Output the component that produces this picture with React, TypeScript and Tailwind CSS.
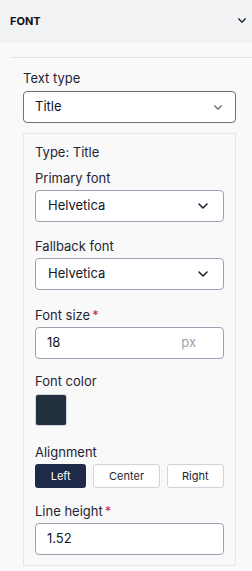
import React from "react";

const Chevron = ({ className = "" }: { className?: string }) => (
  <svg viewBox="0 0 12 8" className={className} fill="none" stroke="currentColor" strokeWidth="1.6" strokeLinecap="round" strokeLinejoin="round">
    <path d="M2 2l4 4 4-4" />
  </svg>
);

const Label = ({ children, required }: { children: React.ReactNode; required?: boolean }) => (
  <div className="text-[13px] leading-4 text-[#1f2433] mb-[4px]">
    {children}
    {required && <span className="text-[#e11d48] ml-[2px]">*</span>}
  </div>
);

const Select = ({ value }: { value: string }) => (
  <div className="h-[32px] rounded-[4px] border border-[#9aa1b1] bg-white flex items-center justify-between pl-[12px] pr-[14px] text-[13px] text-[#111827]">
    <span>{value}</span>
    <Chevron className="w-[12px] h-[8px] text-[#1f2433]" />
  </div>
);

const App = () => {
  return (
    <div className="w-[252px] h-[571px] bg-[#f9f9f9] font-['Inter',sans-serif] overflow-hidden">
      <div className="h-[43px] bg-[#f1f2f4] flex items-start justify-between pl-[10px] pr-[5px] pt-[14px]">
        <span className="text-[11px] font-bold text-[#111] leading-[14px]">FONT</span>
        <Chevron className="w-[10px] h-[7px] mt-[3px] text-[#1f2433]" />
      </div>
      <div className="ml-[10px] mt-[14px] border-t border-[#e3e4e6]" />
      <div className="pl-[23px] pr-[16px] pt-[12px]">
        <div className="text-[13px] leading-4 text-[#1f2433] mb-[5px]">Text type</div>
        <div className="h-[32px] rounded-[4px] border border-[#6b7280] bg-white flex items-center justify-between pl-[11px] pr-[12px] text-[13px] text-[#111827]">
          <span>Title</span>
          <Chevron className="w-[10px] h-[7px] text-[#6b7280]" />
        </div>
        <div className="mt-[10px] border border-[#e6e7e9] px-[11px] pt-[10px] pb-[10px]">
          <div className="text-[13px] leading-4 text-[#1f2433] mb-[10px]">Type: Title</div>
          <Label>Primary font</Label>
          <Select value="Helvetica" />
          <div className="h-[16px]" />
          <Label>Fallback font</Label>
          <Select value="Helvetica" />
          <div className="h-[17px]" />
          <Label required>Font size</Label>
          <div className="h-[32px] rounded-[4px] border border-[#9aa1b1] bg-white flex items-center justify-between pl-[11px] pr-[27px] text-[13px]">
            <span className="text-[#111827]">18</span>
            <span className="text-[#9ca3af]">px</span>
          </div>
          <div className="h-[14px]" />
          <Label>Font color</Label>
          <div className="mt-[5px] w-[32px] h-[32px] rounded-[3px] bg-[#222f3e] border border-[#d1d5db]" />
          <div className="h-[18px]" />
          <Label>Alignment</Label>
          <div className="mt-[3px] flex gap-[7px] text-[11px]">
            <button className="w-[52px] h-[24px] rounded-[3px] bg-[#1e2a47] text-white">Left</button>
            <button className="w-[67px] h-[24px] rounded-[3px] bg-white border border-[#d1d5db] text-[#1f2433]">Center</button>
            <button className="w-[58px] h-[24px] rounded-[3px] bg-white border border-[#d1d5db] text-[#1f2433]">Right</button>
          </div>
          <div className="h-[15px]" />
          <Label required>Line height</Label>
          <div className="mt-[1px] h-[32px] rounded-[4px] border border-[#9aa1b1] bg-white flex items-center pl-[11px] text-[13px] text-[#111827]">
            1.52
          </div>
        </div>
      </div>
    </div>
  );
};

export default App;
